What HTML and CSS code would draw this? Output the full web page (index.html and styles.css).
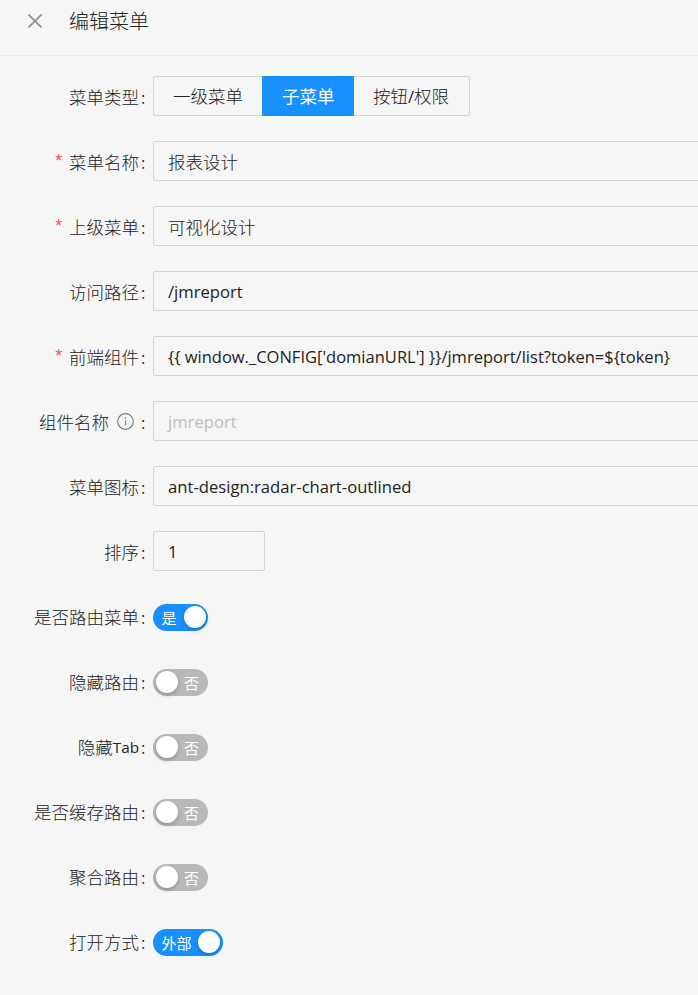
FILE: index.html
```html
<!DOCTYPE html>
<html lang="zh">
<head>
<meta charset="utf-8">
<title>编辑菜单</title>
<link rel="stylesheet" href="styles.css">
</head>
<body>
<header class="head">
  <svg class="close" viewBox="0 0 14 14" width="14" height="14"><path d="M.5 .5L13.5 13.5M13.5 .5L.5 13.5" fill="none" stroke="#8c8c8c" stroke-width="1.6"/></svg>
  <span class="title">编辑菜单</span>
</header>
<form class="form">
  <div class="row"><label class="lab">菜单类型</label><span class="colon">:</span>
    <div class="seg"><span class="seg-i">一级菜单</span><span class="seg-i on">子菜单</span><span class="seg-i">按钮<span class="latin">/</span>权限</span></div></div>
  <div class="row"><label class="lab"><i class="req">*</i>菜单名称</label><span class="colon">:</span><div class="inp">报表设计</div></div>
  <div class="row"><label class="lab"><i class="req">*</i>上级菜单</label><span class="colon">:</span><div class="inp">可视化设计</div></div>
  <div class="row"><label class="lab">访问路径</label><span class="colon">:</span><div class="inp latin">/jmreport</div></div>
  <div class="row"><label class="lab"><i class="req">*</i>前端组件</label><span class="colon">:</span><div class="inp latin long">{{ window._CONFIG['domianURL'] }}/jmreport/list?token=${token}</div></div>
  <div class="row"><label class="lab">组件名称<svg class="info" viewBox="0 0 17 17" width="17" height="17"><circle cx="8.5" cy="8.5" r="7.8" fill="none" stroke="#808080" stroke-width="1.2"/><path d="M8.5 7.2v5.3M8.5 4.2v1.6" stroke="#808080" stroke-width="1.2"/></svg></label><span class="colon">:</span><div class="inp latin off">jmreport</div></div>
  <div class="row"><label class="lab">菜单图标</label><span class="colon">:</span><div class="inp latin">ant-design:radar-chart-outlined</div></div>
  <div class="row"><label class="lab">排序</label><span class="colon">:</span><div class="inp latin num">1</div></div>
  <div class="row"><label class="lab">是否路由菜单</label><span class="colon">:</span><div class="sw on"><span class="sw-t">是</span><span class="knob"></span></div></div>
  <div class="row"><label class="lab">隐藏路由</label><span class="colon">:</span><div class="sw"><span class="knob"></span><span class="sw-t">否</span></div></div>
  <div class="row"><label class="lab">隐藏<span class="latin tab">Tab</span></label><span class="colon">:</span><div class="sw"><span class="knob"></span><span class="sw-t">否</span></div></div>
  <div class="row"><label class="lab">是否缓存路由</label><span class="colon">:</span><div class="sw"><span class="knob"></span><span class="sw-t">否</span></div></div>
  <div class="row"><label class="lab">聚合路由</label><span class="colon">:</span><div class="sw"><span class="knob"></span><span class="sw-t">否</span></div></div>
  <div class="row"><label class="lab">打开方式</label><span class="colon">:</span><div class="sw on"><span class="sw-t">外部</span><span class="knob"></span></div></div>
</form>
</body>
</html>
```
FILE: styles.css
```css
* { box-sizing: border-box; }
html, body { margin: 0; height: 995px; overflow: hidden; }
body { background: #f6f6f6; color: #222; width: 698px; font-family: "Noto Sans CJK SC", "Noto Sans", sans-serif; font-size: 17.5px; font-weight: 300; }
.head { height: 56px; border-bottom: 1px solid #e8e8e8; display: flex; align-items: center; padding: 0 0 14px 28px; }
.close { display: block; }
.title { margin-left: 27px; font-size: 20px; line-height: 24px; }
.form { padding-top: 20px; display: flex; flex-direction: column; gap: 25px; }
.row { display: flex; align-items: center; height: 40px; }
.lab { width: 139px; flex: none; display: flex; justify-content: flex-end; align-items: center; white-space: nowrap; padding-top: 1px; }
.latin { font-family: "Open Sans", "Noto Sans CJK SC", sans-serif; font-size: 16.65px; font-weight: 400; }
.latin.long { font-size: 16.52px; }
.latin.tab { font-size: 15.3px; }
.req { color: #ff4d4f; font-style: normal; margin-right: 5px; font-family: "Liberation Mono", monospace; font-size: 17.5px; }
.colon { width: 14px; flex: none; padding-left: 2px; }
.info { margin-left: 8px; margin-right: 5px; flex: none; }
.inp { flex: none; width: 560px; height: 40px; margin-right: -15px; border: 1px solid #d4d4d4; border-radius: 2px; padding: 0 14px; line-height: 39px; white-space: nowrap; }
.inp.off { color: #bfbfbf; }
.inp.num { width: 112px; margin: 0; }
.seg { display: flex; height: 40px; }
.seg-i { height: 40px; line-height: 38px; border: 1px solid #d4d4d4; margin-left: -1px; padding: 0 19px; }
.seg-i:first-child { margin-left: 0; border-radius: 2px 0 0 2px; }
.seg-i:last-child { border-radius: 0 2px 2px 0; padding-right: 19.5px; }
.seg-i.on { background: #1890ff; border-color: #1890ff; color: #fff; position: relative; font-weight: 400; padding-right: 18.5px; }
.sw { height: 27px; min-width: 55px; margin-top: 2px; border-radius: 14px; background: #b9b9b9; display: flex; align-items: center; padding: 0 2.5px; color: #fff; font-size: 15px; font-weight: 400; justify-content: space-between; }
.sw.on { background: #1890ff; }
.sw-t { padding: 0 6.5px 0 6px; line-height: 27px; }
.knob { width: 22px; height: 22px; border-radius: 50%; background: #fff; display: block; flex: none; box-shadow: 0 2px 4px rgba(0, 35, 11, .25); }
```
